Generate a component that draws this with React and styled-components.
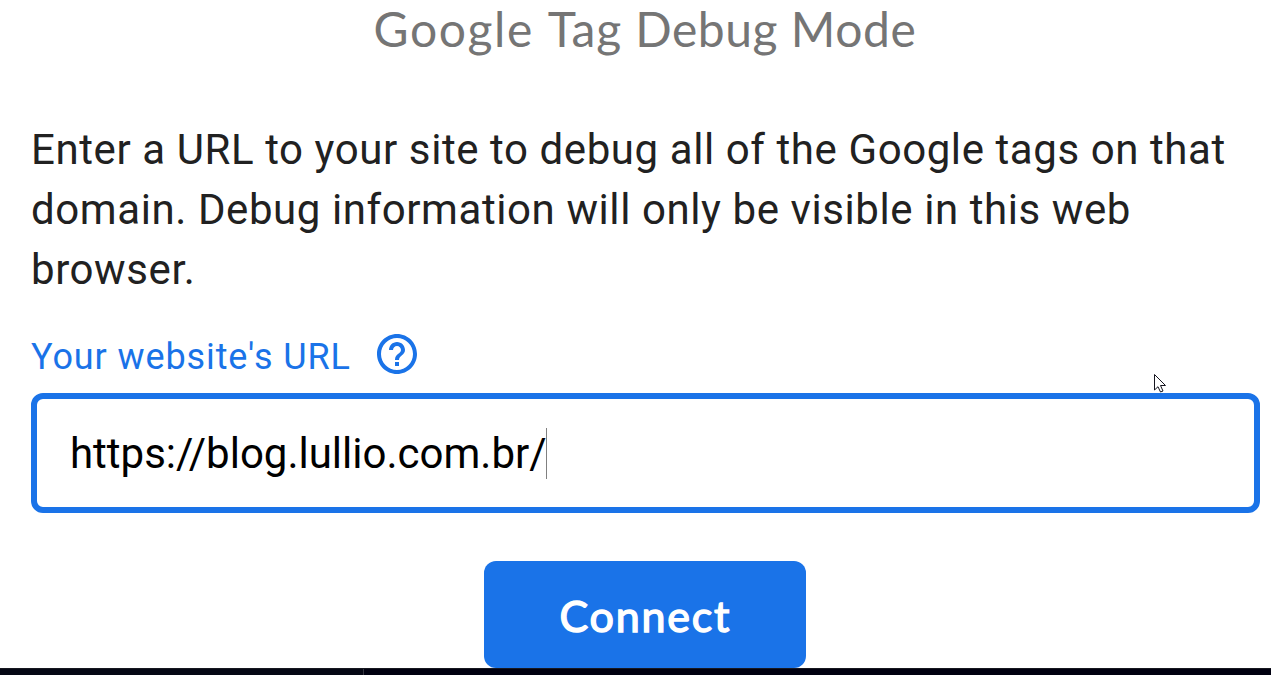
import React from "react";
import styled, { createGlobalStyle } from "styled-components";

const Global = createGlobalStyle`
  * { box-sizing: border-box; }
  body { margin: 0; background: #fff; overflow: hidden; }
`;
const Page = styled.main`
  position: relative;
  display: flex;
  flex-direction: column;
  height: 675px;
  width: 1271px;
  font-family: Roboto, "Liberation Sans", sans-serif;
  overflow: hidden;
`;
const Title = styled.h1`
  margin: 0;
  padding-left: 373.5px;
  height: 120px;
  white-space: nowrap;
  font: 400 48px/58px Lato, sans-serif;
  color: #757575;
`;
const Word = styled.span`
  letter-spacing: ${(p) => p.$spacing}px;
`;
const Intro = styled.p`
  margin: 0 0 0 31px;
  width: 1215px;
  height: 180px;
  font-size: 42px;
  line-height: 60px;
  letter-spacing: 0.585px;
  color: #212121;
`;
const LabelRow = styled.div`
  display: flex;
  align-items: flex-start;
  gap: 24px;
  height: 93px;
  padding: 32px 0 0 31px;
`;
const Label = styled.label`
  padding-top: 4px;
  font-size: 36px;
  line-height: 42px;
  letter-spacing: 0.9px;
  color: #1a73e8;
`;
const Field = styled.div`
  display: flex;
  align-items: center;
  flex: none;
  width: 1229px;
  height: 120px;
  margin-left: 31.4px;
  padding-left: 32.6px;
  border: 6px solid #1a73e8;
  border-radius: 12px;
  font-size: 42px;
  color: #000;
`;
const Caret = styled.span`
  width: 1px;
  height: 51px;
  margin-left: -0.7px;
  background: #808080;
`;
const Button = styled.button`
  flex: none;
  width: 322px;
  height: 107px;
  margin: 48px 0 0 484.4px;
  padding: 3px 0 0;
  border: 0;
  border-radius: 12px;
  background: #1a73e8;
  color: #fff;
  font: 400 43px/50px Lato, sans-serif;
  letter-spacing: 1.8px;
  -webkit-text-stroke: 1.4px #fff;
`;
const BottomBar = styled.footer`
  display: flex;
  flex: none;
  height: 7px;
  border-top: 1px solid #171820;
  background: #000010;
`;
const BarSegment = styled.div`
  width: 364px;
  border-right: 1px solid #34343f;
  background: #050714;
`;
const Pointer = styled.svg`
  position: absolute;
  left: 1154px;
  top: 373px;
`;

export default function App() {
  return (
    <Page>
      <Global />
      <Title>
        <Word $spacing={1.6}>Google </Word>
        <Word $spacing={0.9}>Tag </Word>
        <Word $spacing={0.5}>Debug </Word>
        <Word $spacing={0.6}>Mode</Word>
      </Title>
      <Intro>
        Enter a URL to your site to debug all of the Google tags on that
        domain. Debug information will only be visible in this web browser.
      </Intro>
      <LabelRow>
        <Label>Your website's URL</Label>
        <svg width="44" height="44" viewBox="1 1 22 22" fill="#1a73e8">
          <path d="M11 18h2v-2h-2v2zm1-16C6.48 2 2 6.48 2 12s4.480 10 10 10 10-4.480 10-10S17.520 2 12 2zm0 18c-4.410 0-8-3.590-8-8s3.590-8 8-8 8 3.590 8 8-3.590 8-8 8zm0-14c-2.210 0-4 1.790-4 4h2c0-1.100.900-2 2-2s2 .900 2 2c0 2-3 1.750-3 5h2c0-2.250 3-2.500 3-5 0-2.210-1.790-4-4-4z" />
        </svg>
      </LabelRow>
      <Field><span>https://blog.lullio.com.br/</span><Caret /></Field>
      <Button>Connect</Button>
      <BottomBar><BarSegment /></BottomBar>
      <Pointer width="13" height="20" viewBox="0 0 13 20">
        <path d="M.5 1.500v15.500l3.500-3.300 2.500 5.300 2.500-1-2.500-5.500h5z" fill="#fff" stroke="#15151f" />
      </Pointer>
    </Page>
  );
}
